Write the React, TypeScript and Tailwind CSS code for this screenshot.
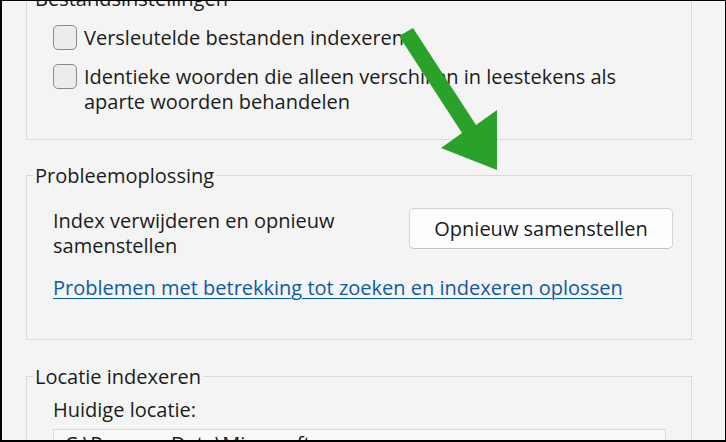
import React from "react";

function Checkbox() {
  return (
    <div className="w-[24px] h-[25px] shrink-0 rounded-[5px] border border-[#8a8a8a] bg-[#ececec]" />
  );
}

export default function App() {
  return (
    <div className="relative w-[726px] h-[442px] overflow-hidden bg-[#f4f4f4] border-black border-l-2 border-t border-r border-b-2 font-['Open_Sans',sans-serif] text-[20px] leading-[25px] text-[#1b1b1b]">
      <div className="pl-[24px]">
        <fieldset className="-mt-[15px] w-[666px] border border-[#dadada] pl-[6px] pr-[18px] pt-[14px] pb-[25px]">
          <legend className="px-[2px]">Bestandsinstellingen</legend>
          <div className="pl-[20px]">
            <div className="flex items-start gap-[7px]">
              <Checkbox />
              <span>Versleutelde bestanden indexeren</span>
            </div>
            <div className="mt-[14px] flex items-start gap-[7px]">
              <Checkbox />
              <span className="w-[560px]">
                Identieke woorden die alleen verschillen in leestekens als aparte woorden behandelen
              </span>
            </div>
          </div>
        </fieldset>

        <fieldset className="mt-[23px] w-[666px] border border-[#dadada] pl-[6px] pr-[18px] pt-[20px] pb-[39px]">
          <legend className="px-[2px]">Probleemoplossing</legend>
          <div className="pl-[20px]">
            <div className="flex items-start">
              <span className="w-[300px]">Index verwijderen en opnieuw samenstellen</span>
              <button className="ml-auto flex h-[41px] w-[264px] items-center justify-center rounded-[5px] border border-[#d3d3d3] border-b-[#c2c2c2] bg-[#fdfdfd] text-[#1b1b1b]">
                Opnieuw samenstellen
              </button>
            </div>
            <div className="mt-[17px]">
              <span className="text-[#0f5aa6] underline decoration-1 underline-offset-[3px]">
                Problemen met betrekking tot zoeken en indexeren oplossen
              </span>
            </div>
          </div>
        </fieldset>

        <fieldset className="mt-[24px] w-[666px] border border-[#dadada] pl-[6px] pr-[18px] pt-[8px] pb-[20px]">
          <legend className="px-[2px]">Locatie indexeren</legend>
          <div className="pl-[20px]">
            <div>Huidige locatie:</div>
            <div className="mt-[7px] h-[40px] w-[613px] border border-[#d9d9d9] bg-[#f9f9f9] pl-[11px] pt-[1px]">
              {"C:\\ProgramData\\Microsoft"}
            </div>
          </div>
        </fieldset>
      </div>

      <svg
        className="pointer-events-none absolute left-0 top-0"
        width="726"
        height="442"
        viewBox="0 0 726 442"
      >
        <polygon
          points="397,35 411,27 474,124 495,109 495,169 439,147 460,132"
          fill="#2aa22a"
        />
      </svg>
    </div>
  );
}
